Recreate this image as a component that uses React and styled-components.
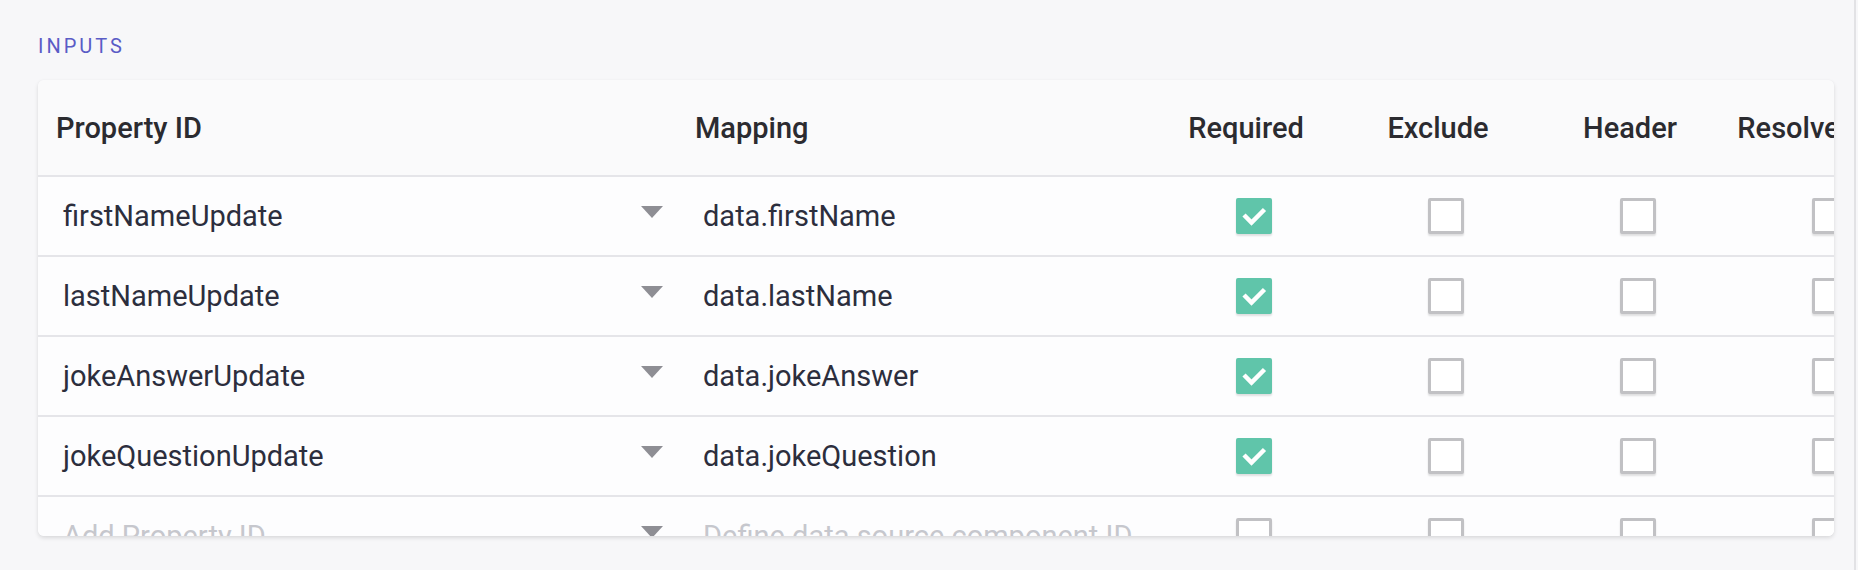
import React from "react";
import styled, { createGlobalStyle } from "styled-components";

const GlobalStyle = createGlobalStyle`
  html, body {
    margin: 0;
    padding: 0;
    background: #f7f7f9;
    font-family: Roboto, "Liberation Sans", Arial, sans-serif;
  }
  #root {
    min-height: 570px;
  }
`;

const COLUMNS = "656px 464px repeat(5, 192px)";

const inputs = [
  { id: "firstNameUpdate", mapping: "data.firstName", required: true },
  { id: "lastNameUpdate", mapping: "data.lastName", required: true },
  { id: "jokeAnswerUpdate", mapping: "data.jokeAnswer", required: true },
  { id: "jokeQuestionUpdate", mapping: "data.jokeQuestion", required: true },
];

const Page = styled.div`
  display: flex;
  height: 570px;
  overflow: hidden;
`;

const Main = styled.div`
  flex: 0 0 1854px;
  border-right: 2px solid #e2e2e5;
  padding: 36px 20px 0 38px;
  box-sizing: border-box;
`;

const SectionLabel = styled.div`
  font-size: 20px;
  line-height: 20px;
  letter-spacing: 3px;
  color: #5a5cc6;
  text-transform: uppercase;
  margin-bottom: 24px;
`;

const Card = styled.div`
  width: 1796px;
  height: 456px;
  background: #fdfdfe;
  border-radius: 6px;
  box-shadow: 0 2px 4px rgba(0, 0, 0, 0.12), 0 0 1px rgba(0, 0, 0, 0.06);
  overflow: hidden;
`;

const Table = styled.div`
  width: max-content;
`;

const Row = styled.div`
  display: grid;
  grid-template-columns: ${COLUMNS};
  height: ${(p) => (p.$head ? "95px" : "78px")};
  background: ${(p) => (p.$head ? "#fafafb" : "#fdfdfe")};
  border-bottom: 2px solid #e5e5e9;
`;

const HeadCell = styled.div`
  display: flex;
  align-items: center;
  justify-content: ${(p) => (p.$center ? "center" : "flex-start")};
  padding: ${(p) => (p.$center ? "0 16px 0 0" : `0 0 0 ${p.$pad || 0}px`)};
  font-size: 29px;
  font-weight: 500;
  color: #2b2b30;
  white-space: nowrap;
`;

const SelectCell = styled.div`
  display: flex;
  align-items: center;
  justify-content: space-between;
  padding: 0 31px 0 25px;
`;

const TextCell = styled.div`
  display: flex;
  align-items: center;
  padding-left: 9px;
`;

const Value = styled.span`
  font-size: 29px;
  color: ${(p) => (p.$placeholder ? "#c6c7cd" : "#2c2e3d")};
  white-space: nowrap;
`;

const Arrow = styled.span`
  width: 0;
  height: 0;
  border-left: 11.5px solid transparent;
  border-right: 11.5px solid transparent;
  border-top: 12px solid #8e8e94;
  margin-bottom: 8px;
`;

const CheckCell = styled.div`
  display: flex;
  align-items: center;
  justify-content: center;
`;

const Box = styled.span`
  width: 36px;
  height: 36px;
  box-sizing: border-box;
  border-radius: 2px;
  display: flex;
  align-items: center;
  justify-content: center;
  background: ${(p) => (p.$checked ? "#60c5aa" : "#ffffff")};
  border: ${(p) => (p.$checked ? "none" : "3px solid #c1c1c4")};
  box-shadow: 0 2px 2px rgba(0, 0, 0, 0.12);
`;

const Check = ({ checked }) => (
  <CheckCell>
    <Box $checked={checked}>
      {checked && (
        <svg width="36" height="36" viewBox="0 0 36 36">
          <path
            d="M8 17 L15.5 24.5 L28.5 11.5"
            fill="none"
            stroke="#ffffff"
            strokeWidth="4.5"
          />
        </svg>
      )}
    </Box>
  </CheckCell>
);

const InputRow = ({ id, mapping, required, placeholder }) => (
  <Row>
    <SelectCell>
      <Value $placeholder={placeholder}>{id}</Value>
      <Arrow />
    </SelectCell>
    <TextCell>
      <Value $placeholder={placeholder}>{mapping}</Value>
    </TextCell>
    <Check checked={required} />
    <Check />
    <Check />
    <Check />
    <Check />
  </Row>
);

export default function App() {
  return (
    <>
      <GlobalStyle />
      <Page>
        <Main>
          <SectionLabel>Inputs</SectionLabel>
          <Card>
            <Table>
              <Row $head>
                <HeadCell $pad={18}>Property ID</HeadCell>
                <HeadCell $pad={1}>Mapping</HeadCell>
                <HeadCell $center>Required</HeadCell>
                <HeadCell $center>Exclude</HeadCell>
                <HeadCell $center>Header</HeadCell>
                <HeadCell $center>Resolve Path</HeadCell>
                <HeadCell $center>Default</HeadCell>
              </Row>
              {inputs.map((r) => (
                <InputRow key={r.id} {...r} />
              ))}
              <InputRow
                placeholder
                id="Add Property ID"
                mapping="Define data source component ID"
              />
            </Table>
          </Card>
        </Main>
      </Page>
    </>
  );
}
